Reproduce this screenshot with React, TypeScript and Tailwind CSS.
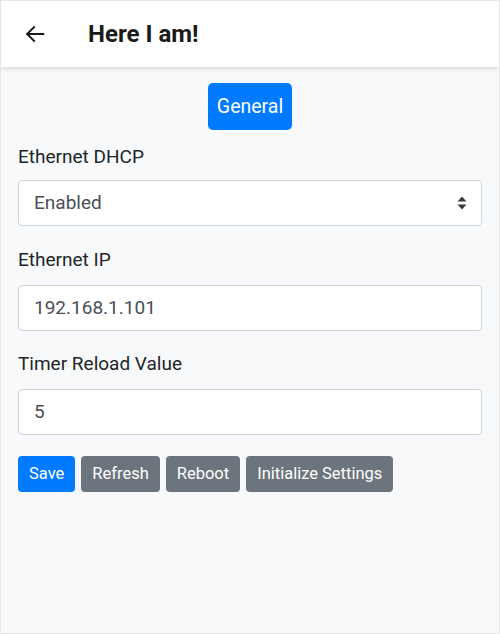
import React from "react";

export default function App() {
  const font = { fontFamily: "Roboto, 'Liberation Sans', sans-serif" };
  return (
    <div style={font} className="w-[500px] h-[634px] bg-[#f8f9fa] border border-[#e6e6e6] flex flex-col overflow-hidden">
      <div className="h-[66px] bg-white flex items-center shadow-[0_2px_4px_rgba(0,0,0,0.12)] relative z-10 shrink-0">
        <svg className="ml-[23px]" width="22" height="22" viewBox="0 0 24 24" fill="none" stroke="#1a1a1a" strokeWidth="2.2" strokeLinecap="square">
          <path d="M21 12H4" />
          <path d="M11 4.5L3.5 12L11 19.5" />
        </svg>
        <div className="ml-[42px] text-[24px] font-bold text-[#1a1a1a]">Here I am!</div>
      </div>
      <div className="px-[17px] flex flex-col">
        <div className="flex justify-center mt-[16px]">
          <button className="h-[47px] px-[9px] rounded-[5px] bg-[#007bff] text-white text-[19.5px] leading-none">General</button>
        </div>
        <label className="mt-[15px] text-[19px] text-[#212529] leading-[24px]">Ethernet DHCP</label>
        <div className="mt-[11px] h-[46px] bg-white border border-[#ced4da] rounded-[4px] flex items-center justify-between pl-[15px] pr-[14px]">
          <span className="text-[19px] text-[#495057]">Enabled</span>
          <svg width="10" height="14" viewBox="0 0 10 14" fill="#343a40">
            <path d="M5 0.5L9.5 5.5H0.5Z" />
            <path d="M5 13.5L9.5 8.5H0.5Z" />
          </svg>
        </div>
        <label className="mt-[22px] text-[19px] text-[#212529] leading-[24px]">Ethernet IP</label>
        <div className="mt-[13px] h-[46px] bg-white border border-[#ced4da] rounded-[4px] flex items-center pl-[15px]">
          <span className="text-[19px] text-[#495057]">192.168.1.101</span>
        </div>
        <label className="mt-[21px] text-[19px] text-[#212529] leading-[24px]">Timer Reload Value</label>
        <div className="mt-[13px] h-[46px] bg-white border border-[#ced4da] rounded-[4px] flex items-center pl-[15px]">
          <span className="text-[19px] text-[#495057]">5</span>
        </div>
        <div className="mt-[21px] flex gap-[6px]">
          <button className="h-[36px] px-[11px] rounded-[4px] bg-[#007bff] text-white text-[16.5px]">Save</button>
          <button className="h-[36px] px-[11px] rounded-[4px] bg-[#6c757d] text-white text-[16.5px]">Refresh</button>
          <button className="h-[36px] px-[11px] rounded-[4px] bg-[#6c757d] text-white text-[16.5px]">Reboot</button>
          <button className="h-[36px] px-[11px] rounded-[4px] bg-[#6c757d] text-white text-[16.5px]">Initialize Settings</button>
        </div>
      </div>
    </div>
  );
}
